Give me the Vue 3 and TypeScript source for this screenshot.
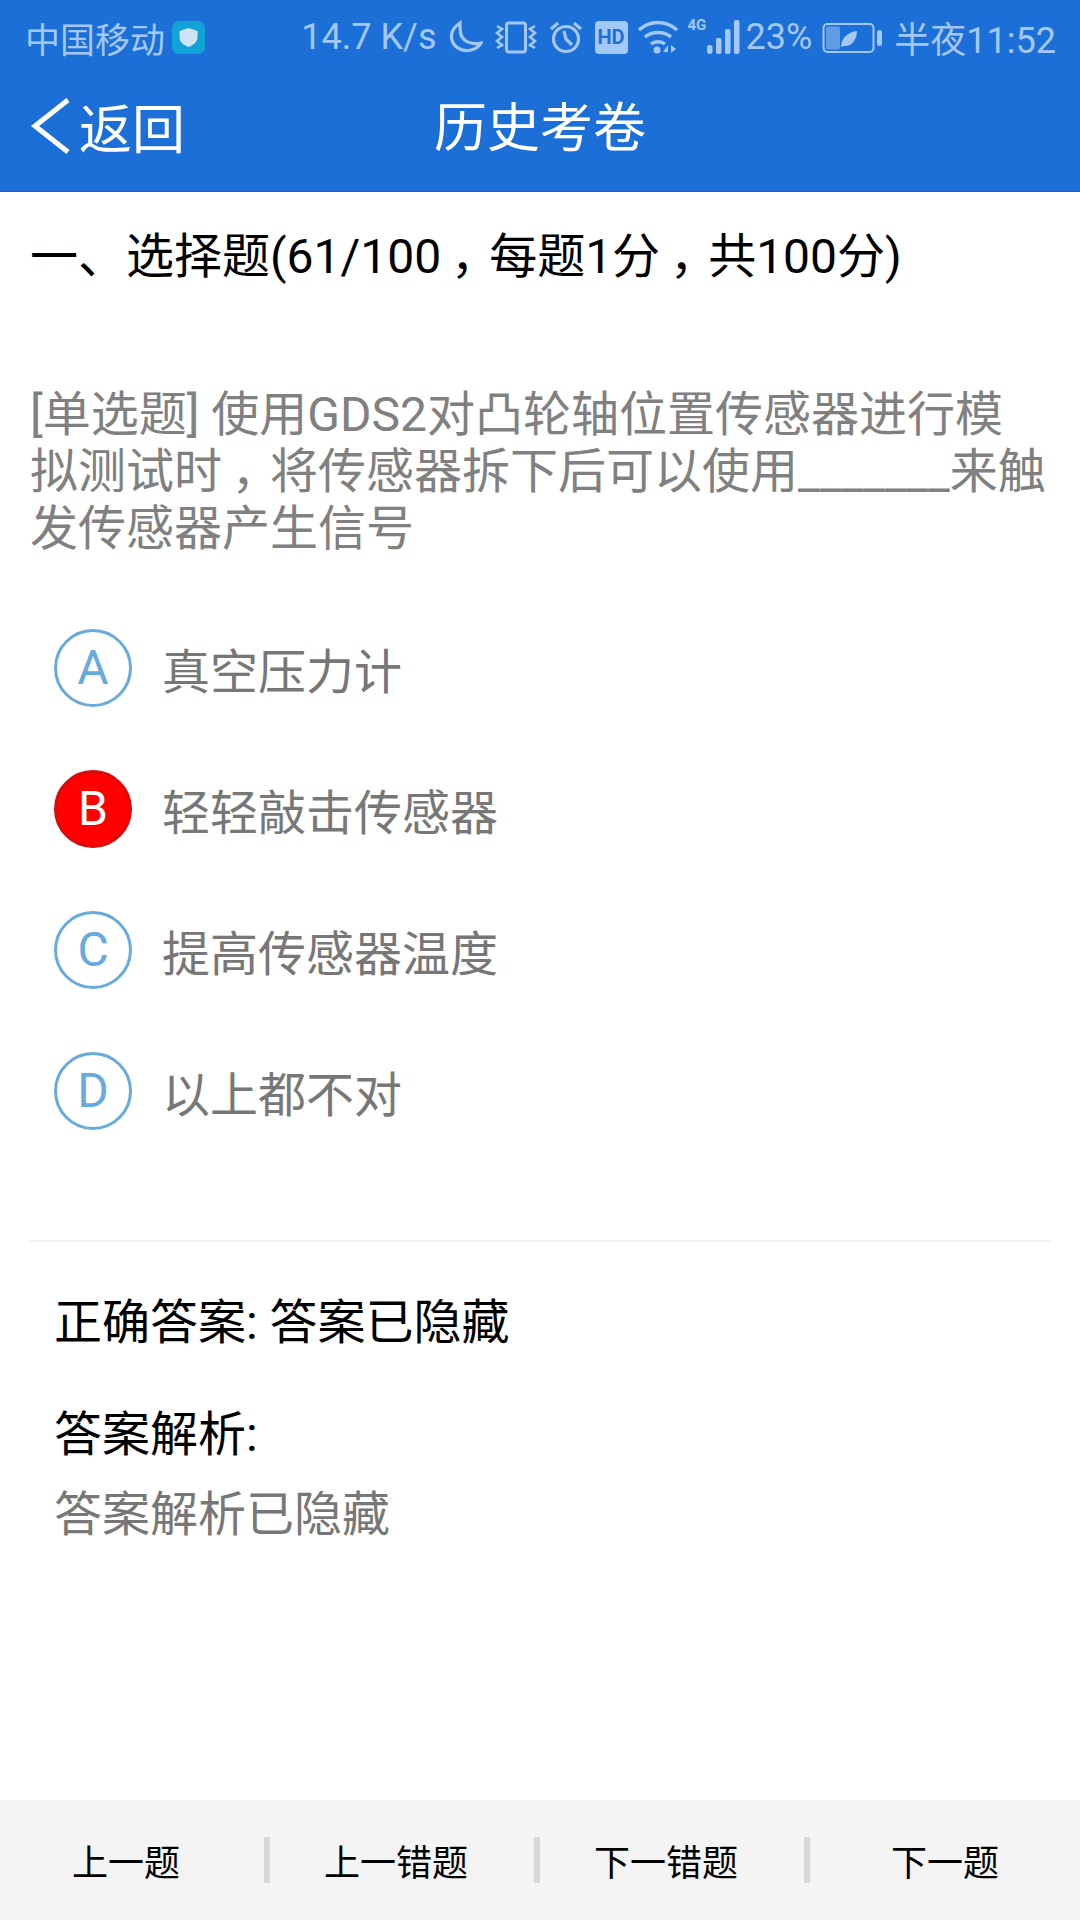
<script setup lang="ts">
const options = [
  { key: 'A', text: '真空压力计', wrong: false },
  { key: 'B', text: '轻轻敲击传感器', wrong: true },
  { key: 'C', text: '提高传感器温度', wrong: false },
  { key: 'D', text: '以上都不对', wrong: false },
]
const actions = ['上一题', '上一错题', '下一错题', '下一题']
</script>

<template>
  <div class="page">
    <header class="header">
      <div class="status">
        <div class="status-left">
          <span>中国移动</span>
          <svg class="ic" viewBox="0 0 33 33" width="33" height="33">
            <rect width="33" height="33" rx="7" fill="#10a3d6" />
            <path d="M16.500 7l9 3v6c0 5-4 8-9 10-5-2-9-5-9-10v-6z" fill="#cfe3f6" />
          </svg>
        </div>
        <div class="status-right">
          <span class="speed">14.7 K/s</span>
          <svg class="ic" viewBox="0 0 36 34" width="36" height="34" fill="none" stroke="#a3c8f5" stroke-width="3.200">
            <path d="M13 3C7 7 3 13 5 20c2 8 11 12 19 10 4-1 8-3 10-7-9 2-17-1-20-8-1-4-1-8-1-12z" />
          </svg>
          <svg class="ic" viewBox="0 0 42 34" width="42" height="34" fill="none" stroke="#a3c8f5" stroke-width="3">
            <rect x="11.500" y="3" width="19" height="29" rx="2.500" />
            <path d="M2 6l5 3-5 4 5 4-5 4 5 4-5 3M40 6l-5 3 5 4-5 4 5 4-5 4 5 3" stroke-width="2.600" />
          </svg>
          <svg class="ic" viewBox="0 0 34 34" width="34" height="34" fill="none" stroke="#a3c8f5" stroke-width="3.200">
            <circle cx="17" cy="19" r="12.500" />
            <path d="M15 11l2 8 6 6M2 9l7-6M32 9l-7-6" />
          </svg>
          <span class="hd">HD</span>
          <svg class="ic wifi" viewBox="0 0 40 36" width="40" height="36" fill="none" stroke="#a3c8f5" stroke-width="3.400">
            <path d="M1 11c11-10 27-10 38 0M7 18c7-6 19-6 26 0M13 25c4-3 10-3 14 0" />
            <circle cx="19" cy="31" r="3.500" fill="#a3c8f5" stroke="none" />
            <path d="M25 33l5-7v7zM33 26l5 4-5 4z" fill="#a3c8f5" stroke="none" />
          </svg>
          <span class="signal">
            <span class="net">4G</span>
            <svg viewBox="0 0 36 36" width="36" height="36" fill="#a3c8f5">
              <rect x="1" y="26" width="5.500" height="9" rx="2.700" />
              <rect x="10" y="19" width="5.500" height="16" rx="2" />
              <rect x="19" y="10" width="5.500" height="25" rx="2" />
              <rect x="28" y="1" width="5.500" height="34" rx="2" />
            </svg>
          </span>
          <span class="pct">23%</span>
          <svg class="ic" viewBox="0 0 60 34" width="60" height="34" fill="none">
            <rect x="1.500" y="4" width="50" height="28" rx="4" stroke="#a3c8f5" stroke-width="2" />
            <rect x="4" y="6.500" width="14" height="23" rx="2" fill="#5f9be6" />
            <path d="M19 27c0-9 7-15 16-16 0 9-6 16-13 15z" fill="#a3c8f5" />
            <rect x="55" y="10" width="5" height="16" rx="2.500" fill="#a3c8f5" />
          </svg>
          <span>半夜11:52</span>
        </div>
      </div>
      <div class="nav">
        <div class="back">
          <svg viewBox="0 0 42 58" width="42" height="58" fill="none" stroke="#fff" stroke-width="5">
            <path d="M38 3L5 29l33 26" />
          </svg>
          <span>返回</span>
        </div>
        <div class="nav-title">历史考卷</div>
      </div>
    </header>

    <main class="content">
      <h1 class="section">一、选择题(61/100<span class="comma">，</span>每题1分<span class="comma">，</span>共100分)</h1>
      <p class="question">[单选题] 使用GDS2对凸轮轴位置传感器进行模拟测试时<span class="comma">，</span>将传感器拆下后可以使用_______来触发传感器产生信号</p>
      <ul class="options">
        <li v-for="o in options" :key="o.key" class="option">
          <span class="badge" :class="{ wrong: o.wrong }">{{ o.key }}</span>
          <span>{{ o.text }}</span>
        </li>
      </ul>
      <div class="answers">
        <p class="answer">正确答案: 答案已隐藏</p>
        <p class="analysis">答案解析:</p>
        <p class="hidden">答案解析已隐藏</p>
      </div>
    </main>

    <footer class="footer">
      <button v-for="a in actions" :key="a" class="action">{{ a }}</button>
    </footer>
  </div>
</template>

<style>
html, body { margin: 0; background: #fff; }
</style>

<style scoped>
.page {
  width: 1080px;
  height: 1920px;
  display: flex;
  flex-direction: column;
  font-family: Roboto, "Noto Sans CJK SC", sans-serif;
  background: #fff;
}
.header {
  height: 192px;
  box-sizing: border-box;
  background: #1c6fd6;
  border-bottom: 1px solid #1a62bd;
}
.status {
  height: 74px;
  padding: 0 24px 0 25px;
  display: flex;
  align-items: center;
  justify-content: space-between;
  color: #a3c8f5;
  font-size: 36px;
}
.status-left, .status-right { display: flex; align-items: center; }
.status-left { gap: 7px; font-size: 35px; }
.status-right { gap: 12px; }
.ic { display: block; }
.speed { margin-right: -2px; }
.hd {
  width: 33px;
  height: 33px;
  border-radius: 4px;
  background: #a3c8f5;
  color: #1c6fd6;
  font-size: 20px;
  font-weight: 700;
  line-height: 33px;
  text-align: center;
}
.wifi { margin: 0 -2px; }
.signal { position: relative; display: flex; padding-left: 18px; }
.net {
  position: absolute;
  left: 0;
  top: -2px;
  font-size: 15px;
  font-weight: 700;
  line-height: 16px;
}
.pct { margin-left: -8px; margin-right: -2px; }
.nav {
  position: relative;
  height: 117px;
  display: flex;
  align-items: center;
  justify-content: center;
  color: #fff;
}
.back {
  position: absolute;
  left: 30px;
  top: 14px;
  display: flex;
  align-items: center;
  gap: 7px;
  font-size: 53px;
}
.nav-title { font-size: 53px; margin-top: -18px; }
.content { flex: 1; padding: 0 30px; }
.section {
  margin: 0;
  padding-top: 32px;
  font-size: 48px;
  font-weight: 400;
  line-height: 66px;
  color: #000;
  white-space: nowrap;
}
.comma {
  display: inline-block;
  transform: translateX(0.2em);
}
.question {
  margin: 0;
  padding-top: 96px;
  font-size: 48px;
  line-height: 57px;
  color: #808080;
}
.options {
  list-style: none;
  margin: 0;
  padding: 40px 0 0 24px;
}
.option {
  height: 141px;
  display: flex;
  align-items: center;
  gap: 30px;
  font-size: 48px;
  color: #777;
}
.badge {
  width: 78px;
  height: 78px;
  box-sizing: border-box;
  border: 3px solid #66aade;
  border-radius: 50%;
  display: flex;
  align-items: center;
  justify-content: center;
  color: #66aade;
  font-size: 48px;
}
.badge.wrong {
  background: #f00;
  border-color: #d90a0a;
  color: #fff;
}
.answers {
  margin-top: 79px;
  border-top: 2px solid #f2f2f2;
  padding: 43px 24px 0;
  font-size: 48px;
  color: #000;
}
.answers p { margin: 0; line-height: 76px; }
.analysis { margin-top: 36px !important; }
.hidden { color: #777; padding-top: 4px; }
.footer {
  height: 120px;
  background: #f4f4f4;
  display: flex;
  align-items: center;
}
.action {
  flex: none;
  width: 270px;
  height: 46px;
  box-sizing: border-box;
  padding: 8px 12px 0 0;
  border: 0;
  border-right: 6px solid #d8d8d8;
  background: none;
  color: #000;
  font-family: inherit;
  font-size: 36px;
  line-height: 38px;
}
.action:last-child { border-right: 0; padding-right: 0; }
</style>
